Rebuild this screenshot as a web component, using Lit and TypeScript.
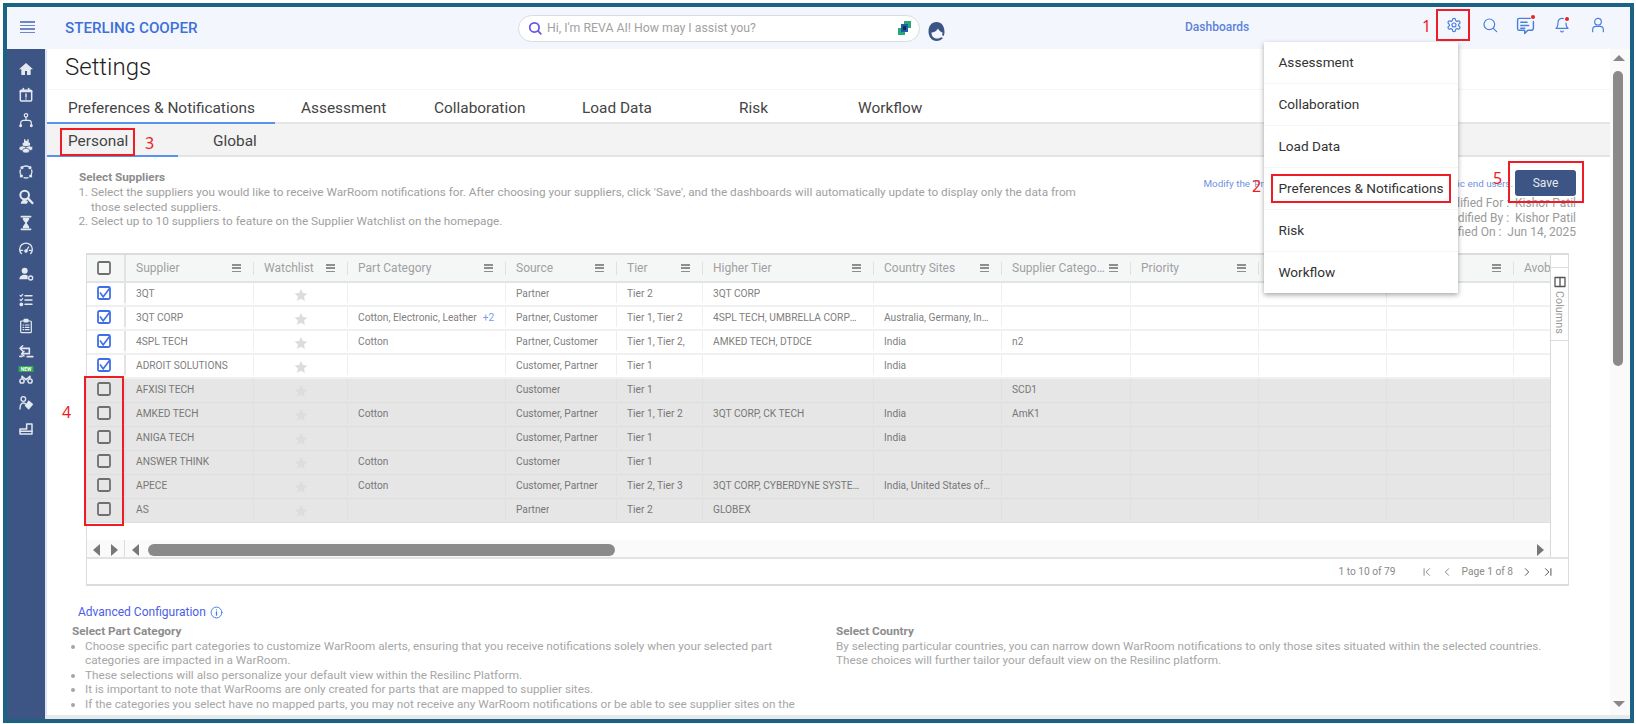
import { LitElement, html, css, svg } from "lit";
import { customElement } from "lit/decorators.js";

const columns = [
  { label: "Supplier", w: 128 },
  { label: "Watchlist", w: 94 },
  { label: "Part Category", w: 158 },
  { label: "Source", w: 111 },
  { label: "Tier", w: 86 },
  { label: "Higher Tier", w: 171 },
  { label: "Country Sites", w: 128 },
  { label: "Supplier Category", w: 129 },
  { label: "Priority", w: 128 },
  { label: "", w: 128 },
  { label: "", w: 127 },
  { label: "Avoby", w: 128 },
];
const template = "39px " + columns.map((c) => c.w + "px").join(" ");

const rows = [
  { on: true, c: ["3QT", "", "Partner", "Tier 2", "3QT CORP", "", ""] },
  { on: true, more: "+2", c: ["3QT CORP", "Cotton, Electronic, Leather", "Partner, Customer", "Tier 1, Tier 2", "4SPL TECH, UMBRELLA CORPORATION", "Australia, Germany, India, Japan", ""] },
  { on: true, c: ["4SPL TECH", "Cotton", "Partner, Customer", "Tier 1, Tier 2,", "AMKED TECH, DTDCE", "India", "n2"] },
  { on: true, c: ["ADROIT SOLUTIONS", "", "Customer, Partner", "Tier 1", "", "India", ""] },
  { on: false, c: ["AFXISI TECH", "", "Customer", "Tier 1", "", "", "SCD1"] },
  { on: false, c: ["AMKED TECH", "Cotton", "Customer, Partner", "Tier 1, Tier 2", "3QT CORP, CK TECH", "India", "AmK1"] },
  { on: false, c: ["ANIGA TECH", "", "Customer, Partner", "Tier 1", "", "India", ""] },
  { on: false, c: ["ANSWER THINK", "Cotton", "Customer", "Tier 1", "", "", ""] },
  { on: false, c: ["APECE", "Cotton", "Customer, Partner", "Tier 2, Tier 3", "3QT CORP, CYBERDYNE SYSTEMS INC", "India, United States of America", ""] },
  { on: false, c: ["AS", "", "Partner", "Tier 2", "GLOBEX", "", ""] },
];

const tabs = ["Preferences & Notifications", "Assessment", "Collaboration", "Load Data", "Risk", "Workflow"];
const tabWidths = [228, 133, 148, 157, 119, 140];
const menu = ["Assessment", "Collaboration", "Load Data", "Preferences & Notifications", "Risk", "Workflow"];

const s = (body: unknown, vb = "0 0 24 24") =>
  html`<svg class="ic" viewBox=${vb} fill="none" stroke="currentColor" stroke-width="1.8" stroke-linecap="round" stroke-linejoin="round">${body}</svg>`;

const sideIcons = [
  svg`<path fill="currentColor" stroke="none" d="M12 3 1.500 12.500H5V21h5.500v-6h3v6H19v-8.500h3.500z"/>`,
  svg`<rect x="3.500" y="5" width="17" height="16" rx="1.500" stroke-width="2.200"/><path stroke-width="2.600" d="M3.500 6.500h17M8 2.500v3M16 2.500v3"/><path stroke-width="2.200" d="M12 10.500v4.500M12 18v.1"/>`,
  svg`<circle cx="12" cy="5" r="2.600"/><path d="M12 8v4M4 20v-3.500a4 4 0 0 1 4-4h8a4 4 0 0 1 4 4V20"/><circle cx="4" cy="20.500" r="1.300" fill="currentColor"/><circle cx="20" cy="20.500" r="1.300" fill="currentColor"/>`,
  svg`<path fill="currentColor" stroke="none" d="M9 2h2v2h3V2h2v5h2v5H7V7h2z"/><ellipse cx="7" cy="15.500" rx="5.500" ry="3.600" fill="currentColor" stroke="#3d5585" stroke-width="1"/><ellipse cx="17" cy="15.500" rx="5.500" ry="3.600" fill="currentColor" stroke="#3d5585" stroke-width="1"/><ellipse cx="12" cy="19" rx="5.500" ry="3.600" fill="currentColor" stroke="#3d5585" stroke-width="1"/>`,
  svg`<path stroke-width="2" d="M8.500 3.700A9 9 0 0 1 15.500 3.700M20.500 9a9 9 0 0 1-.5 6.500M15 20.500a9 9 0 0 1-6 0M3.800 15.500A9 9 0 0 1 3.500 9"/><circle cx="6" cy="5.500" r="1.500" fill="currentColor"/><circle cx="18" cy="5.500" r="1.500" fill="currentColor"/><circle cx="19" cy="18" r="1.500" fill="currentColor"/><circle cx="5" cy="18" r="1.500" fill="currentColor"/>`,
  svg`<circle cx="10" cy="9" r="6.500" stroke-width="3"/><path stroke-width="3.600" d="m15 14 6.500 7"/><path fill="currentColor" stroke="none" d="M4 22c.5-4 3-6 6-6s4 1.500 5 3l-2 3z"/>`,
  svg`<path stroke-width="2.400" d="M5 2.500h14M5 21.500h14"/><path fill="currentColor" stroke="none" d="M7 4h10c0 4-3 6-4 8 1 2 4 4 4 8H7c0-4 3-6 4-8-1-2-4-4-4-8z"/>`,
  svg`<path stroke-width="2" d="M5 19A9.500 9.500 0 1 1 19 19"/><path stroke-width="2" d="M4 14h3M17 14h3M12 15l4-6"/><circle cx="12" cy="15" r="1.800" fill="currentColor"/>`,
  svg`<circle cx="10" cy="7" r="4.500" fill="currentColor" stroke="none"/><path fill="currentColor" stroke="none" d="M2 20c0-4.500 3.500-7 8-7 2 0 3.500.5 4.500 1.200V20z"/><circle cx="19" cy="18" r="3" stroke-width="2"/>`,
  svg`<path stroke-width="2.200" d="M10.500 5.500H21M10.500 12H21M10.500 18.500H21"/><path stroke-width="1.800" d="m3 5 1.500 1.500L7 3.500M3 11.500 4.500 13 7 10"/><circle cx="5" cy="18.500" r="2" fill="currentColor"/>`,
  svg`<rect x="4" y="4.500" width="16" height="17.500" rx="1.500"/><rect x="9" y="2" width="6" height="4" rx="1" fill="currentColor"/><path d="M7.500 10.500h1M11 10.500h5.500M7.500 14h1M11 14h5.500M7.500 17.500h1M11 17.500h5.500"/>`,
  svg`<path stroke-width="2.400" d="M4 8h13M17 8v8M17 16H6"/><path stroke-width="2.200" d="M7 4 3 8l4 4M9 12.500 5.500 16 9 19.500"/><path stroke-width="2.800" d="M14 20.500h8M3 20h3"/>`,
  svg`<circle cx="6" cy="18" r="3.200" stroke-width="2.200"/><circle cx="18" cy="18" r="3.200" stroke-width="2.200"/><path stroke-width="2.200" d="M6 11v4M18 11v4M6 11l6 5 6-5"/>`,
  svg`<circle cx="8" cy="6" r="3.500" stroke-width="2"/><path stroke-width="2" d="M3 21c0-6 1.500-9 5-9 1.500 0 2.500.5 3.500 1.500"/><path fill="currentColor" stroke="none" d="m16 8 7 6-7 8-6-6z"/>`,
  svg`<path stroke-width="2.200" d="M3 13.500h10V6h8v15H3z"/><path stroke-width="2.200" d="M3 17h18"/>`,
];

@customElement("app-root")
export class AppRoot extends LitElement {
  static styles = css`
    :host { display: block; width: 1636px; height: 724px; box-sizing: border-box; padding: 3px 2px 1px 3px; background: #fff; font-family: Roboto, "Liberation Sans", sans-serif; color: #555; }
    .ic { display: block; width: 100%; height: 100%; }
    .frame { position: relative; height: 100%; box-sizing: border-box; border: 4px solid #1c6282; display: flex; flex-direction: column; overflow: hidden; background: #fff; }

    .top { height: 42px; flex: none; background: #f3f7fd; display: flex; align-items: center; }
    .burger { width: 15px; height: 12px; margin-left: 13px; margin-top: -2px; display: flex; flex-direction: column; justify-content: space-between; }
    .burger i { display: block; height: 1.500px; background: #6d88c4; }
    .logo { margin-left: 30px; width: 453px; font-size: 15.200px; font-weight: 500; color: #3f70d9; }
    .pill { box-sizing: border-box; width: 402px; height: 27px; border: 1px solid #d8dbe0; border-radius: 14px; background: #fff; display: flex; align-items: center; padding: 0 7px 0 9px; }
    .pill .mag { width: 14px; height: 14px; color: #6756e4; flex: none; }
    .pill span { margin-left: 5px; flex: 1; font-size: 12.300px; color: #a2a2a2; }
    .reva { width: 15px; height: 15px; flex: none; }
    .avatar { width: 17px; height: 19px; margin-left: 8px; margin-top: 6px; flex: none; }
    .dash { margin-left: 240px; font-size: 12px; font-weight: 500; color: #5c82d8; margin-top: -2px; }
    .hicons { margin-left: 186.500px; display: flex; margin-top: -6px; }
    .hicon { position: relative; width: 36px; height: 16px; display: flex; justify-content: center; color: #4a80dc; }
    .hicon svg { width: 16px; height: 16px; display: block; flex: none; }
    .hicon.wide svg { width: 19px; height: 19px; margin-top: -1px; }
    .dot { position: absolute; width: 4px; height: 4px; border-radius: 50%; background: #e8232a; }
    .dot.chat { right: 9px; top: -2px; }
    .dot.bell { right: 11px; top: 0; }

    .body { flex: 1; min-height: 0; display: flex; }
    .side { width: 38px; flex: none; background: #3d5585; border-right: 2px solid #dfe6f3; box-sizing: content-box; padding-top: 7px; display: flex; flex-direction: column; align-items: center; }
    .si { position: relative; height: 25.700px; flex: none; display: flex; align-items: center; justify-content: center; color: #e4e8f0; }
    .si > svg { width: 16px; height: 16px; }
    .new { position: absolute; top: 2px; left: 50%; transform: translateX(-50%); width: 15px; height: 6px; background: #2fa84f; color: #fff; font-size: 5px; line-height: 6px; text-align: center; font-weight: 700; }

    .mainwrap { flex: 1; min-width: 0; display: flex; flex-direction: column; }
    .mainrow { flex: 1; min-height: 0; display: flex; }
    .main { flex: 1; min-width: 0; overflow: hidden; margin-bottom: 3px; }
    .hbar { height: 4px; flex: none; background: #e9e9e9; }

    .title { height: 41px; box-sizing: border-box; border-bottom: 1px solid #f5f5f5; padding-left: 18px; font-size: 24px; font-weight: 300; color: #222; line-height: 36px; }
    .tabs { height: 34px; display: flex; box-sizing: border-box; border-bottom: 2px solid #e6e6e6; }
    .tab { box-sizing: border-box; height: 34px; padding: 9px 0 0 21px; font-size: 15.400px; line-height: 19px; color: #444; white-space: nowrap; }
    .tab.on { border-bottom: 2px solid #5b92ee; margin-right: 5px; }
    .subtabs { height: 33px; display: flex; box-sizing: border-box; background: #f3f3f3; border-bottom: 2px solid #e4e4e4; }
    .sub { box-sizing: border-box; height: 33px; padding: 8px 0 0 21px; font-size: 15.400px; line-height: 19px; color: #444; }
    .sub.a { width: 131px; border-bottom: 2px solid #5b92ee; }
    .sub.b { padding-left: 35px; }

    .intro { height: 96px; box-sizing: border-box; padding: 13px 34px 0 32px; display: flex; justify-content: space-between; }
    .lead { width: 1011px; font-size: 11.750px; line-height: 14.800px; color: #a0a0a0; }
    .lead b { font-weight: 700; color: #8c8c8c; }
    .lead ol { margin: 0; padding-left: 12px; }
    .act { display: flex; flex-direction: column; align-items: flex-end; font-size: 12px; color: #9a9a9a; }
    .actrow { display: flex; align-items: center; gap: 2px; }
    .modify { font-size: 9.900px; color: #6e92e2; white-space: nowrap; }
    .save { box-sizing: border-box; width: 61px; height: 26px; background: #3d5585; color: #e6e9f0; border-radius: 3px; font-size: 12px; text-align: center; line-height: 26px; }
    .meta { line-height: 14.500px; }
    .metas { text-align: right; font-size: 12px; }

    .grid { margin-left: 39px; width: 1483px; box-sizing: border-box; height: 333px; border: 1px solid #dcdcdc; border-top-width: 2px; border-bottom-width: 2px; display: flex; flex-direction: column; }
    .gridtop { display: flex; height: 302px; border-bottom: 2px solid #e3e3e3; flex: none; }
    .view { flex: 1; min-width: 0; overflow: hidden; display: flex; flex-direction: column; border-right: 1px solid #d8d8d8; }
    .hrow, .row { display: grid; width: 1596px; flex: none; }
    .hrow { background: #f5f7f7; border-bottom: 2px solid #e3e3e3; box-sizing: content-box; height: 26px; }
    .hcheck { border-right: 2px solid #e3e3e3; display: flex; align-items: center; justify-content: center; padding-right: 4px; }
    .hc { position: relative; display: flex; align-items: center; padding: 0 13px 0 10px; font-size: 12px; color: #a0a0a0; min-width: 0; }
    .hc span { flex: 1; min-width: 0; overflow: hidden; white-space: nowrap; text-overflow: ellipsis; }
    .hc::after { content: ""; position: absolute; right: 0; top: 7px; height: 13px; width: 1px; background: #e0e0e0; }
    .lines { width: 9px; height: 8px; flex: none; display: flex; flex-direction: column; justify-content: space-between; margin-left: 4px; }
    .lines i { display: block; height: 1.500px; background: #8e8e8e; }
    .row { height: 24px; box-sizing: border-box; background: #fff; border-bottom: 2px solid #f0f0f0; }
    .row.off { background: #e6e6e6; border-bottom: 1px solid #dfdfdf; }
    .cell { display: flex; align-items: center; padding: 0 10px; border-right: 1px solid #eeeeee; font-size: 10.200px; color: #808080; min-width: 0; }
    .row.off .cell { border-right-color: #e0e0e0; color: #777; }
    .cell .t { overflow: hidden; white-space: nowrap; text-overflow: ellipsis; }
    .more { margin-left: 6px; color: #7d9ce6; flex: none; }
    .cb { width: 14px; height: 14px; flex: none; color: #3f6fe8; }
    .cellc { display: flex; align-items: center; justify-content: center; padding-right: 4px; border-right: 2px solid #e3e3e3; }
    .row.off .cellc { border-right-color: #e0e0e0; }
    .cb.blank { color: #6f6f6f; }
    .star { justify-content: center; padding: 4px 0 0; }
    .star svg { width: 14px; height: 14px; color: #dcdcdc; }
    .row.off .star svg { color: #dddddd; }
    .gap { height: 17px; flex: none; }
    .sbar { height: 19px; flex: none; background: #fafafa; display: flex; align-items: center; width: 100%; }
    .tri { width: 0; height: 0; border-top: 6px solid transparent; border-bottom: 6px solid transparent; flex: none; }
    .tri.l { border-right: 7px solid #777; }
    .tri.r { border-left: 7px solid #777; }
    .pair { width: 38px; box-sizing: border-box; padding: 0 6px; display: flex; justify-content: space-between; border-right: 1px solid #dcdcdc; height: 19px; align-items: center; flex: none; }
    .tri.l2 { margin-left: 7px; }
    .thumb { width: 467px; height: 12px; border-radius: 6px; background: #8a8a8a; margin-left: 9px; flex: none; }
    .tri.end { margin-left: auto; margin-right: 6px; }
    .panel { width: 17px; flex: none; display: flex; flex-direction: column; }
    .ptab { margin-top: 12px; height: 74px; border-top: 1px solid #ddd; border-bottom: 1px solid #ddd; display: flex; flex-direction: column; align-items: center; padding-top: 8px; box-sizing: border-box; color: #555; }
    .ptab svg { width: 12px; height: 12px; flex: none; }
    .ptab span { writing-mode: vertical-rl; font-size: 10.800px; color: #9a9a9a; margin-top: 3px; }
    .foot { flex: 1; display: flex; align-items: center; justify-content: flex-end; font-size: 10.200px; color: #8a8a8a; padding-right: 15px; }
    .pg { width: 10px; height: 10px; flex: none; color: #8c8c8c; }
    .pg.dark { color: #555; }
    .foot .count { margin-right: 26px; }
    .foot .page { margin: 0 8.500px 0 10px; }
    .foot .g { margin-left: 10px; }
    .foot .gr { margin-left: 11.500px; }

    .adv { margin: 18px 0 0 31px; height: 16px; display: flex; align-items: center; gap: 4px; font-size: 12px; color: #4b5de8; }
    .adv svg { width: 13px; height: 13px; color: #3f7fe0; }
    .cols { margin-top: 4px; padding-left: 25px; display: grid; grid-template-columns: 764px 710px; font-size: 11.750px; line-height: 14.500px; color: #a6a6a6; }
    .cols b { font-weight: 700; color: #8c8c8c; display: block; }
    .cols ul { margin: 0; padding-left: 13px; width: 726px; box-sizing: border-box; }

    .vs { width: 20px; flex: none; background: #fafafa; box-sizing: border-box; padding: 6px 0 0 3px; display: flex; flex-direction: column; }
    .up, .down { width: 0; height: 0; border-left: 6px solid transparent; border-right: 6px solid transparent; flex: none; }
    .up { border-bottom: 6px solid #888; }
    .down { border-top: 6px solid #888; margin-top: auto; margin-bottom: 8px; }
    .vthumb { width: 10px; height: 295px; margin-top: 10px; border-radius: 5px; background: #8a8a8a; flex: none; }

    .dd { position: absolute; left: 1257px; top: 35px; width: 194px; height: 251px; background: #fff; box-shadow: 0 2px 5px rgba(0,0,0,.35); display: flex; flex-direction: column; }
    .dd div { flex: 1; box-sizing: border-box; padding-left: 14.500px; padding-bottom: 1px; display: flex; align-items: center; font-size: 13.600px; color: #333; border-bottom: 1px solid #f5f5f5; }
    .dd div:last-child { border-bottom: 0; }

    .box { position: absolute; box-sizing: border-box; border: 2px solid #ee1c25; pointer-events: none; }
    .n { position: absolute; color: #ee1c25; font-family: "Noto Sans", sans-serif; font-size: 16px; line-height: 18px; }
    .b1 { left: 1429px; top: 2px; width: 34px; height: 32px; }
    .b2 { left: 1264px; top: 167px; width: 180px; height: 29px; }
    .b3 { left: 53px; top: 121px; width: 75px; height: 28px; }
    .b4 { left: 77px; top: 369px; width: 40px; height: 150px; }
    .b5 { left: 1501px; top: 154px; width: 76px; height: 42px; }
    .n1 { left: 1415px; top: 10px; }
    .n2 { left: 1245px; top: 170px; }
    .n3 { left: 138px; top: 127px; }
    .n4 { left: 55px; top: 396px; }
    .n5 { left: 1486px; top: 162px; }
  `;

  private box(on: boolean) {
    return html`<svg class="cb ${on ? "" : "blank"}" viewBox="0 0 14 14" fill="none">
      <rect x="1" y="1" width="12" height="12" rx="1.500" stroke="currentColor" stroke-width="1.800" fill=${on ? "#fff" : "none"}></rect>
      ${on ? svg`<path d="m3 6.500 3.200 4.300L12.500 2.500" stroke="currentColor" stroke-width="1.600"/>` : ""}
    </svg>`;
  }

  render() {
    return html`
      <div class="frame">
        <header class="top">
          <div class="burger"><i></i><i></i><i></i><i></i></div>
          <div class="logo">STERLING COOPER</div>
          <div class="pill">
            <div class="mag">${s(svg`<circle cx="11" cy="11" r="8" stroke-width="3"/><path stroke-width="3" d="m17 17 5 5"/>`)}</div>
            <span>Hi, I'm REVA AI! How may I assist you?</span>
            <svg class="reva" viewBox="0 0 15 15">
              <rect x="7" y="0" width="7" height="7" fill="#27a878"></rect>
              <rect x="1" y="7" width="7" height="7" fill="#27a878"></rect>
              <rect x="4" y="3" width="7" height="8" fill="#1a5fa8"></rect>
              <rect x="6" y="5" width="3" height="4" fill="#0d2d55"></rect>
            </svg>
          </div>
          <svg class="avatar" viewBox="0 0 17 19">
            <path fill="#3d5585" d="M8.500 0C3.500 0 .5 4 .5 9.500c0 5.500 3.500 9.500 8 9.500 2.500 0 5-1 6.500-3l-2-.8c-1 .8-2.500 1.300-4 1.300-3.500 0-5.500-2.500-5.500-6 2.500 0 5-1.500 6.500-4 1 2 2.500 3.500 4.500 4 0 1-.2 2-.5 2.800l1.700.8c.6-1.400.8-2.800.8-4.100C16.500 4 13.500 0 8.500 0z"></path>
          </svg>
          <div class="dash">Dashboards</div>
          <div class="hicons">
            <div class="hicon">${s(svg`<path d="M12.220 2h-.44a2 2 0 0 0-2 2v.18a2 2 0 0 1-1 1.730l-.43.25a2 2 0 0 1-2 0l-.15-.08a2 2 0 0 0-2.730.73l-.22.38a2 2 0 0 0 .73 2.730l.15.1a2 2 0 0 1 1 1.720v.51a2 2 0 0 1-1 1.740l-.15.09a2 2 0 0 0-.73 2.730l.22.38a2 2 0 0 0 2.730.73l.15-.08a2 2 0 0 1 2 0l.43.25a2 2 0 0 1 1 1.730V20a2 2 0 0 0 2 2h.44a2 2 0 0 0 2-2v-.18a2 2 0 0 1 1-1.730l.43-.25a2 2 0 0 1 2 0l.15.08a2 2 0 0 0 2.730-.73l.22-.39a2 2 0 0 0-.73-2.730l-.15-.08a2 2 0 0 1-1-1.740v-.5a2 2 0 0 1 1-1.740l.15-.09a2 2 0 0 0 .73-2.730l-.22-.38a2 2 0 0 0-2.730-.73l-.15.08a2 2 0 0 1-2 0l-.43-.25a2 2 0 0 1-1-1.730V4a2 2 0 0 0-2-2z"/><circle cx="12" cy="12" r="3"/>`)}</div>
            <div class="hicon">${s(svg`<circle cx="11" cy="11" r="8"/><path d="m17 17 5 5"/>`)}</div>
            <div class="hicon wide">${s(svg`<path d="M18 3H4a2 2 0 0 0-2 2v11a2 2 0 0 0 2 2h7v4l4-4h4a3 3 0 0 0 3-3V7"/><path d="M6 8h8M6 12h10M6 15.500h5"/>`)}<i class="dot chat"></i></div>
            <div class="hicon">${s(svg`<path d="M6 8a6 6 0 0 1 8-5.600M18 9c0 6 3 8 3 8H3s3-2 3-9"/><path d="M10 21a2.200 2.200 0 0 0 4 0"/>`)}<i class="dot bell"></i></div>
            <div class="hicon">${s(svg`<circle cx="12" cy="7" r="5"/><path d="M4 22v-3a5 5 0 0 1 5-5h6a5 5 0 0 1 5 5v3"/>`)}</div>
          </div>
        </header>

        <div class="body">
          <nav class="side">
            ${sideIcons.map(
              (g, i) => html`<div class="si">${s(g)}${i === 12 ? html`<span class="new">NEW</span>` : ""}</div>`
            )}
          </nav>
          <div class="mainwrap">
            <div class="mainrow">
              <main class="main">
                <div class="title">Settings</div>
                <div class="tabs">
                  ${tabs.map(
                    (t, i) => html`<div class="tab ${i === 0 ? "on" : ""}" style="width:${tabWidths[i]}px">${t}</div>`
                  )}
                </div>
                <div class="subtabs">
                  <div class="sub a">Personal</div>
                  <div class="sub b">Global</div>
                </div>

                <section class="intro">
                  <div class="lead">
                    <b>Select Suppliers</b>
                    <ol>
                      <li>Select the suppliers you would like to receive WarRoom notifications for. After choosing your suppliers, click 'Save', and the dashboards will automatically update to display only the data from those selected suppliers.</li>
                      <li>Select up to 10 suppliers to feature on the Supplier Watchlist on the homepage.</li>
                    </ol>
                  </div>
                  <div class="act">
                    <div class="actrow">
                      <span class="modify">Modify the 'Preferences &amp; Notifications' settings for specific end users.</span>
                      <div class="save">Save</div>
                    </div>
                    <div class="metas">
                      <div class="meta">Last Modified For :&nbsp; Kishor Patil</div>
                      <div class="meta">Last Modified By :&nbsp; Kishor Patil</div>
                      <div class="meta">Last Modified On :&nbsp; Jun 14, 2025</div>
                    </div>
                  </div>
                </section>

                <section class="grid">
                  <div class="gridtop">
                    <div class="view">
                      <div class="hrow" style="grid-template-columns:${template}">
                        <div class="hcheck">${this.box(false)}</div>
                        ${columns.map(
                          (c, i) => html`<div class="hc"><span>${c.label}</span>${i < 11 ? html`<div class="lines"><i></i><i></i><i></i></div>` : ""}</div>`
                        )}
                      </div>
                      ${rows.map((r) => html`
                        <div class="row ${r.on ? "" : "off"}" style="grid-template-columns:${template}">
                          <div class="cellc">${this.box(r.on)}</div>
                          <div class="cell"><span class="t">${r.c[0]}</span></div>
                          <div class="cell star">${s(svg`<path fill="currentColor" stroke="none" d="m12 1.500 3.200 7 7.600.9-5.600 5.200 1.500 7.500L12 18.300l-6.700 3.800 1.500-7.500L1.200 9.400l7.600-.9z"/>`)}</div>
                          <div class="cell"><span class="t">${r.c[1]}</span>${r.more ? html`<span class="more">${r.more}</span>` : ""}</div>
                          ${r.c.slice(2).map((v) => html`<div class="cell"><span class="t">${v}</span></div>`)}
                          <div class="cell"></div><div class="cell"></div><div class="cell"></div><div class="cell"></div><div class="cell"></div>
                        </div>`)}
                      <div class="gap"></div>
                      <div class="sbar">
                        <div class="pair"><i class="tri l"></i><i class="tri r"></i></div>
                        <i class="tri l l2"></i>
                        <div class="thumb"></div>
                        <i class="tri r end"></i>
                      </div>
                    </div>
                    <div class="panel">
                      <div class="ptab">
                        ${s(svg`<rect x="2" y="3" width="20" height="18" stroke-width="2.600"/><path stroke-width="2.600" d="M12 3v18"/>`)}
                        <span>Columns</span>
                      </div>
                    </div>
                  </div>
                  <div class="foot">
                    <span class="count">1 to 10 of 79</span>
                    <div class="pg">${s(svg`<path stroke-width="2.400" d="M5 4v16M18 4l-8 8 8 8"/>`)}</div>
                    <div class="pg g">${s(svg`<path stroke-width="2.400" d="m16 4-8 8 8 8"/>`)}</div>
                    <span class="page">Page 1 of 8</span>
                    <div class="pg dark">${s(svg`<path stroke-width="2.400" d="m8 4 8 8-8 8"/>`)}</div>
                    <div class="pg dark gr">${s(svg`<path stroke-width="2.400" d="m6 4 8 8-8 8M19 4v16"/>`)}</div>
                  </div>
                </section>

                <div class="adv">
                  <span>Advanced Configuration</span>
                  ${s(svg`<circle cx="12" cy="12" r="10"/><path stroke-width="2.400" d="M12 11v6M12 7v.1"/>`)}
                </div>
                <div class="cols">
                  <div>
                    <b>Select Part Category</b>
                    <ul>
                      <li>Choose specific part categories to customize WarRoom alerts, ensuring that you receive notifications solely when your selected part categories are impacted in a WarRoom.</li>
                      <li>These selections will also personalize your default view within the Resilinc Platform.</li>
                      <li>It is important to note that WarRooms are only created for parts that are mapped to supplier sites.</li>
                      <li>If the categories you select have no mapped parts, you may not receive any WarRoom notifications or be able to see supplier sites on the Resilinc platform.</li>
                    </ul>
                  </div>
                  <div>
                    <b>Select Country</b>
                    By selecting particular countries, you can narrow down WarRoom notifications to only those sites situated within the selected countries. These choices will further tailor your default view on the Resilinc platform.
                  </div>
                </div>
              </main>
              <aside class="vs">
                <i class="up"></i>
                <div class="vthumb"></div>
                <i class="down"></i>
              </aside>
            </div>
            <div class="hbar"></div>
          </div>
        </div>

        <div class="dd">${menu.map((m) => html`<div>${m}</div>`)}</div>

        <div class="box b1"></div>
        <div class="box b2"></div>
        <div class="box b3"></div>
        <div class="box b4"></div>
        <div class="box b5"></div>
        <span class="n n1">1</span>
        <span class="n n2">2</span>
        <span class="n n3">3</span>
        <span class="n n4">4</span>
        <span class="n n5">5</span>
      </div>
    `;
  }
}
